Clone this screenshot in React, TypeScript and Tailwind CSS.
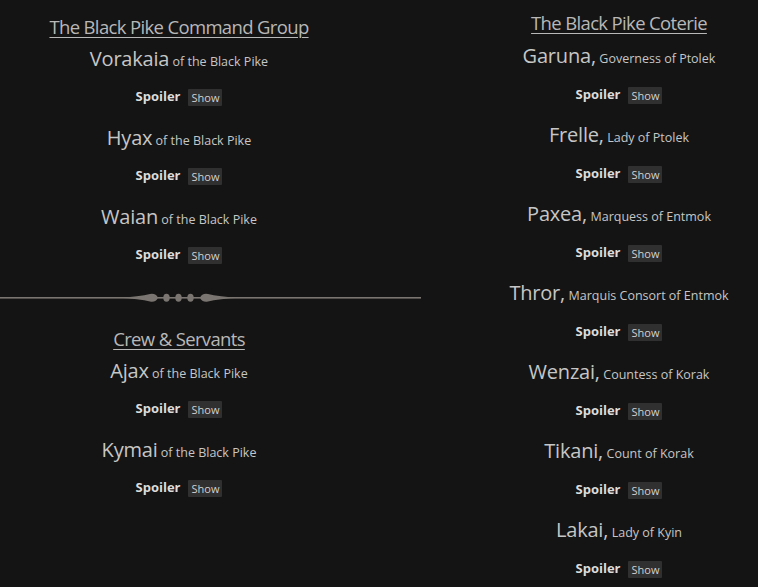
import React from 'react';

// ─── Data ─────────────────────────────────────────────────────────────────────

type Member = { name: string; sep: string; title: string };

const COMMAND: Member[] = [
  { name: 'Vorakaia', sep: ' ', title: 'of the Black Pike' },
  { name: 'Hyax',     sep: ' ', title: 'of the Black Pike' },
  { name: 'Waian',    sep: ' ', title: 'of the Black Pike' },
];

const CREW: Member[] = [
  { name: 'Ajax',  sep: ' ', title: 'of the Black Pike' },
  { name: 'Kymai', sep: ' ', title: 'of the Black Pike' },
];

const COTERIE: Member[] = [
  { name: 'Garuna', sep: ', ', title: 'Governess of Ptolek' },
  { name: 'Frelle', sep: ', ', title: 'Lady of Ptolek' },
  { name: 'Paxea',  sep: ', ', title: 'Marquess of Entmok' },
  { name: 'Thror',  sep: ', ', title: 'Marquis Consort of Entmok' },
  { name: 'Wenzai', sep: ', ', title: 'Countess of Korak' },
  { name: 'Tikani', sep: ', ', title: 'Count of Korak' },
  { name: 'Lakai',  sep: ', ', title: 'Lady of Kyin' },
];

// ─── Pieces ───────────────────────────────────────────────────────────────────

function Heading({ children }: { children: React.ReactNode }) {
  return (
    <h2 className="h-[28px] text-center text-[18.5px] leading-[28px] font-normal tracking-[-0.65px] text-[#b8b8b8] underline decoration-1 underline-offset-[3px]">
      {children}
    </h2>
  );
}

function Entry({ m, gap }: { m: Member; gap: string }) {
  const [open, setOpen] = React.useState(false);
  return (
    <div className="flex h-[79px] flex-col items-center">
      <p className="h-[28px] leading-[28px] text-[#c6c6c6] whitespace-nowrap">
        <span className="text-[20px] tracking-[-0.2px]">{m.name}</span>
        <span className="text-[20px]">{m.sep.trim()}</span>
        <span className="text-[12.5px]">{' '}{m.title}</span>
      </p>
      <div className={`${gap} flex h-[20px] items-center gap-[8px]`}>
        <span className="text-[13px] font-bold text-[#dcdcdc]">Spoiler</span>
        <button
          onClick={() => setOpen(!open)}
          className="h-[17px] w-[34px] rounded-[1px] bg-[#303030] text-[11px] leading-[17px] text-[#d0d0d0]"
        >
          {open ? 'Hide' : 'Show'}
        </button>
      </div>
    </div>
  );
}

function Divider() {
  return (
    <svg width="421" height="12" viewBox="0 0 421 12" className="block">
      <rect x="0" y="5" width="421" height="1.6" fill="#7a7570" />
      <path d="M117 5.8 Q140 4.8 150 2 Q156 1 158 5.8 Q156 10.6 150 9.6 Q140 6.8 117 5.8 Z" fill="#7a7570" />
      <path d="M241 5.8 Q218 4.8 208 2 Q202 1 200 5.8 Q202 10.6 208 9.6 Q218 6.8 241 5.8 Z" fill="#7a7570" />
      <ellipse cx="166.5" cy="5.8" rx="3.2" ry="4" fill="#7a7570" />
      <ellipse cx="178.5" cy="5.8" rx="3.2" ry="4" fill="#7a7570" />
      <ellipse cx="190.5" cy="5.8" rx="3.2" ry="4" fill="#7a7570" />
    </svg>
  );
}

// ─── Page ─────────────────────────────────────────────────────────────────────

export default function App() {
  return (
    <div
      className="flex h-[587px] w-[758px] overflow-hidden bg-[#141414]"
      style={{ fontFamily: '"Open Sans", "Noto Sans", sans-serif' }}
    >
      <div className="flex w-[358px] shrink-0 flex-col pt-[13px]">
        <Heading>The Black Pike Command Group</Heading>
        <div className="mt-[4px]">
          {COMMAND.map((m) => <Entry key={m.name} m={m} gap="mt-[14px]" />)}
        </div>
        <div className="mt-[10px]">
          <Divider />
        </div>
        <div className="mt-[21px]">
          <Heading>Crew &amp; Servants</Heading>
        </div>
        <div className="mt-[4px]">
          {CREW.map((m) => <Entry key={m.name} m={m} gap="mt-[14px]" />)}
        </div>
      </div>

      <div className="ml-[122px] flex w-[278px] shrink-0 flex-col pt-[9px]">
        <Heading>The Black Pike Coterie</Heading>
        <div className="mt-[5px]">
          {COTERIE.map((m) => <Entry key={m.name} m={m} gap="mt-[15px]" />)}
        </div>
      </div>
    </div>
  );
}
